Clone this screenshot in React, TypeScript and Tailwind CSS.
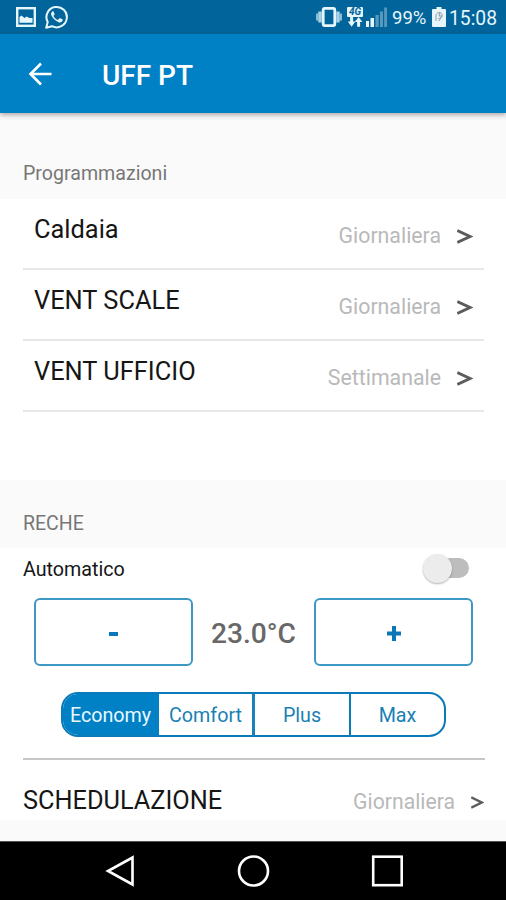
import React from "react";

const programs = [
  { name: "Caldaia", mode: "Giornaliera" },
  { name: "VENT SCALE", mode: "Giornaliera" },
  { name: "VENT UFFICIO", mode: "Settimanale" },
];

function StatusBar() {
  return (
    <div className="flex h-[34px] items-center bg-[#01659b] pl-4 text-[#e6f6fb]">
      <svg width="20" height="20" viewBox="0 0 20 20" fill="none">
        <rect x="1.2" y="1.2" width="17.6" height="17.6" stroke="currentColor" strokeWidth="2.4" />
        <path d="M3.500 15.800V10l2-1.500 3 2.500 2-1.500 3 1.500h3v4.800z" fill="currentColor" />
      </svg>
      <svg className="ml-[9px]" width="24" height="24" viewBox="0 0 24 24" fill="currentColor">
        <path
          d="M1.200 22.800l1.500-5.800A10.200 10.200 0 1 1 7 21.200z"
          fill="none"
          stroke="currentColor"
          strokeWidth="2"
          strokeLinejoin="round"
        />
        <path d="M8.600 6.700c-.4-.5-1-.5-1.500 0-1 1-1.300 2.300-.6 3.800 1.500 3.200 3.900 5.500 7.200 6.700 1.600.6 3-.1 3.800-1.400.4-.7.300-1.200-.2-1.500l-2-1c-.5-.2-.8-.1-1.100.3l-.8 1c-.3.300-.6.300-1 .1-1.700-.8-2.900-1.900-3.700-3.300-.2-.4-.2-.6.1-.9.700-.8.900-1.200.7-1.700z" />
      </svg>
      <svg className="ml-[247px]" width="26" height="20" viewBox="0 0 26 20">
        <path d="M1.200 6.500v7M24.800 6.500v7" stroke="#8fc3dc" strokeWidth="2.200" />
        <path d="M4 4.500v11M22 4.500v11" stroke="#a9d3e6" strokeWidth="3.400" />
        <rect x="7.200" y="1.400" width="11.600" height="17.200" rx="1.500" fill="none" stroke="currentColor" strokeWidth="2.800" />
      </svg>
      <div className="ml-[5px] flex h-5 w-4 flex-col items-center">
        <span className="flex h-[10px] w-4 items-center justify-center rounded-[1px] bg-[#e6f6fb] text-[10px] leading-none font-bold text-[#01659b] italic">
          4G
        </span>
        <svg width="16" height="10" viewBox="0 0 16 10" fill="currentColor">
          <path d="M3.100 0h3v4.500h2.300L4.600 9.800 0.800 4.500h2.300zM10.100 9.800h3V5h2.300L11.600 0 7.800 5h2.300z" />
        </svg>
      </div>
      <svg className="ml-[3px]" width="22" height="20" viewBox="0 0 22 20">
        <path d="M0 14h3v6H0zM4.500 11h3.500v9H4.500z" fill="#e6f6fb" />
        <path d="M9.500 8h3.200v12H9.500zM14 4.500h3v15.500h-3zM18.200 0.500h2.800V20h-2.800z" fill="#5799bd" />
      </svg>
      <span className="ml-[4px] w-[36px] pt-[3px] text-[18.500px] leading-none whitespace-nowrap">99%</span>
      <svg className="ml-[4px]" width="14" height="20" viewBox="0 0 14 20">
        <path d="M4.500 0h5v2H13a1 1 0 0 1 1 1v16a1 1 0 0 1-1 1H1a1 1 0 0 1-1-1V3a1 1 0 0 1 1-1h3.500z" fill="#e6f6fb" />
        <path d="M4 14V9c0-5 7-4 6 0-.5 2-2 2.500-4 2.500M8 5l-1 4h3l-3 5" fill="none" stroke="#8a9ca5" strokeWidth="1" />
      </svg>
      <span className="ml-[3px] pt-[3px] text-[19.300px] leading-none">15:08</span>
    </div>
  );
}

function AppBar() {
  return (
    <header className="relative z-10 flex h-[79px] items-center bg-[#0081c6] pl-[28px] text-white shadow-[0_2px_5px_rgba(60,40,40,0.4)]">
      <svg width="24" height="24" viewBox="0 0 24 24" fill="none" stroke="currentColor" strokeWidth="2.600">
        <path d="M23.500 12H3M13 1.500L2.500 12 13 22.500" />
      </svg>
      <h1 className="ml-[50px] pt-[4px] text-[28px] leading-none font-medium">UFF PT</h1>
    </header>
  );
}

function Chevron({ small = false }: { small?: boolean }) {
  return (
    <svg
      className={small ? "ml-4 h-[13px] w-[13px]" : "ml-4 h-[15px] w-4"}
      viewBox="0 0 16 15"
      preserveAspectRatio="none"
      fill="none"
      stroke="#5c5c5c"
      strokeWidth="2.800"
    >
      <path d="M0.300 1.600L13 7.500 0.300 13.400" />
    </svg>
  );
}

function Segments() {
  return (
    <div className="mt-[26px] ml-[61px] flex h-[45px] w-[385px] overflow-hidden rounded-[17px] border-2 border-[#0a7ab8] text-[19.700px] leading-none text-[#1a7fb4]">
      <div className="flex w-[96px] items-center justify-center bg-[#0081c6] pt-[2px] pr-px text-[#eaf8ff]">Economy</div>
      <div className="flex w-[96px] items-center justify-center border-r-[3px] border-[#1a82b8] pt-[2px]">Comfort</div>
      <div className="flex w-[96px] items-center justify-center border-r-2 border-[#0a7ab8] pt-[2px]">Plus</div>
      <div className="flex flex-1 items-center justify-center pt-[2px]">Max</div>
    </div>
  );
}

export default function App() {
  return (
    <div className="flex h-[900px] w-[506px] flex-col overflow-hidden bg-white font-[Roboto,sans-serif]">
      <StatusBar />
      <AppBar />
      <div className="flex h-[86px] items-center bg-[#fafafa] pt-[35px] pl-[23px] text-[19.600px] leading-none text-[#777]">
        Programmazioni
      </div>
      <div className="h-[281px] px-[23px]">
        {programs.map((p) => (
          <div key={p.name} className="flex h-[71px] w-[461px] items-center border-b-2 border-[#e7e7e7] pl-[11px]">
            <span className="pb-[8px] text-[25.400px] leading-none text-[#161616]">{p.name}</span>
            <span className="ml-auto pt-[4px] text-[21.300px] leading-none text-[#b9b9b9]">{p.mode}</span>
            <span className="flex pt-[5px] pr-[11px]">
              <Chevron />
            </span>
          </div>
        ))}
      </div>
      <div className="flex h-[68px] items-center bg-[#fafafa] pt-[19px] pl-[23px] text-[19.500px] leading-none text-[#777]">
        RECHE
      </div>
      <div className="flex h-[42px] items-center pr-[37px] pl-[23px]">
        <span className="pt-px text-[19.700px] leading-none text-[#161616]">Automatico</span>
        <div className="ml-auto flex items-center pb-[2px]">
          <div className="z-10 h-[29px] w-[29px] rounded-full bg-[#ececec] shadow-[0_1px_2px_rgba(0,0,0,0.3)]" />
          <div className="-ml-4 h-5 w-[33px] rounded-full bg-[#bdbdbd]" />
        </div>
      </div>
      <div className="mt-2 flex h-[68px] items-center pl-[34px] text-[#0a78b8]">
        <div className="flex h-full w-[159px] items-center justify-center rounded-[6px] border-2 border-[#3d98c5]">
          <span className="mt-1 h-[4px] w-[9px] bg-current" />
        </div>
        <span className="w-[121px] pt-[5px] text-center text-[28.200px] leading-none font-medium text-[#686868]">23.0°C</span>
        <div className="flex h-full w-[159px] items-center justify-center rounded-[6px] border-2 border-[#3d98c5]">
          <svg className="mt-[3px]" width="14" height="15" viewBox="0 0 14 15" stroke="currentColor" strokeWidth="4">
            <path d="M7 0v15M0 7.500h14" />
          </svg>
        </div>
      </div>
      <Segments />
      <div className="mt-[21px] ml-[23px] h-[2px] w-[462px] bg-[#c6c6c6]" />
      <div className="flex h-[60px] items-center pt-[20px] pr-[22px] pl-[23px]">
        <span className="pt-[2px] text-[25.300px] leading-none text-[#161616]">SCHEDULAZIONE</span>
        <span className="ml-auto pt-[3px] text-[21.200px] leading-none text-[#b9b9b9]">Giornaliera</span>
        <span className="pt-[5px]">
          <Chevron small />
        </span>
      </div>
      <div className="h-[21px] bg-[#fafafa]" />
      <nav className="h-[59px] border-t border-[#555] bg-black">
        <svg width="506" height="58" viewBox="0 842 506 58" fill="none" stroke="white" strokeWidth="2.600">
          <path d="M132.500 857.500v27L108 871z" />
          <circle cx="253.500" cy="871" r="14.500" />
          <rect x="373.200" y="856.700" width="28.500" height="28.500" />
        </svg>
      </nav>
    </div>
  );
}
